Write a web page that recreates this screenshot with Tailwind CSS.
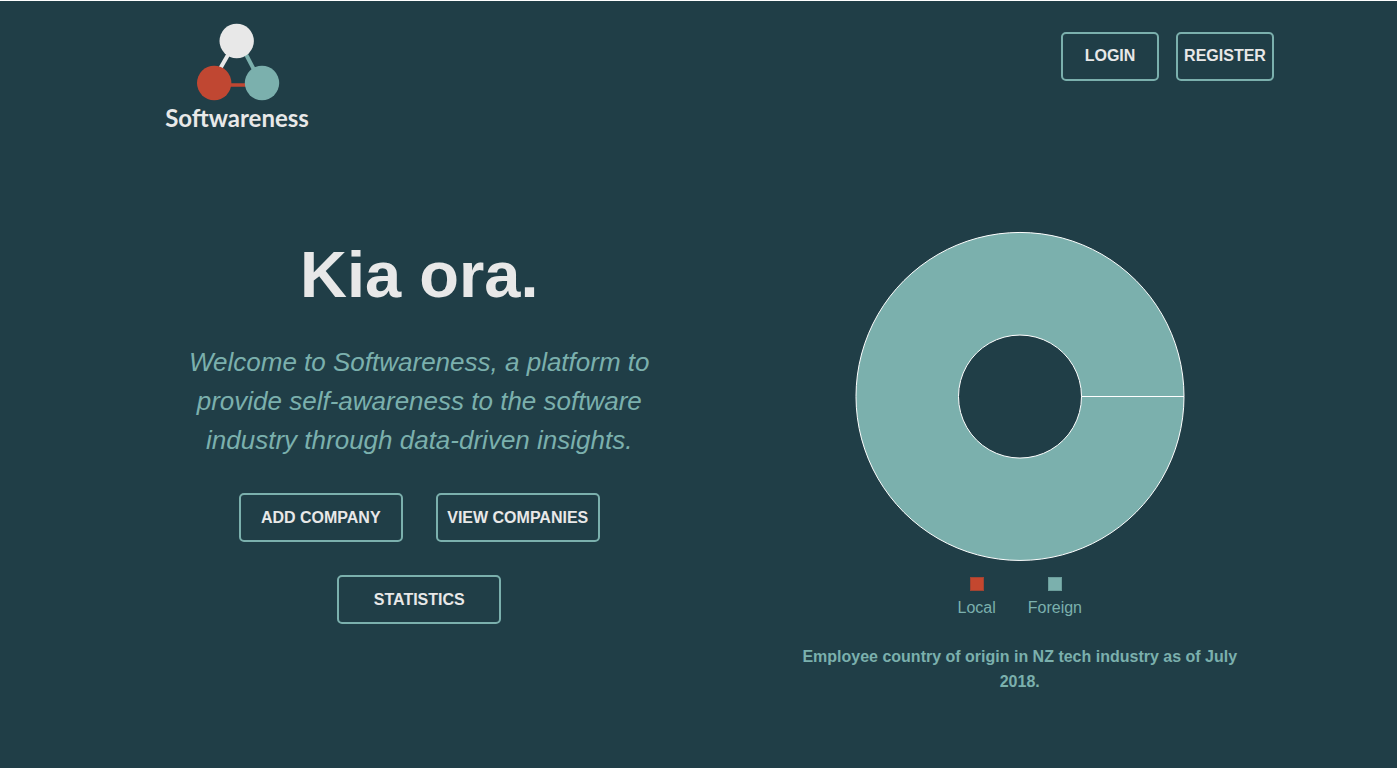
<!DOCTYPE html>
<html lang="en">
<head>
<meta charset="utf-8">
<meta name="viewport" content="width=device-width, initial-scale=1">
<title>Softwareness</title>
<script src="https://cdn.jsdelivr.net/npm/@tailwindcss/browser@4"></script>
</head>
<body class="min-h-screen border-t border-white bg-[#203e47] pl-[42px] font-['Liberation_Sans',Arial,sans-serif] text-base text-[#e8e8e8]">
<div class="mx-auto max-w-[1201px]">
  <header class="flex items-start justify-between pt-[21px] pr-[46px] pl-[44px]">
    <a href="#" class="flex w-[148px] flex-col items-center">
      <svg class="h-[80px] w-[88px]" viewBox="193 22 88 80" aria-hidden="true">
        <path d="M236 41 213 81" stroke="#e8e8e8" stroke-width="4"/>
        <path d="M239 41 261 83" stroke="#7bb0ad" stroke-width="4"/>
        <path d="M214 85H262" stroke="#c04732" stroke-width="3.6"/>
        <circle cx="236.7" cy="41" r="17.2" fill="#e8e8e8"/>
        <circle cx="214.2" cy="83" r="17.2" fill="#c04732"/>
        <circle cx="262" cy="83" r="17.2" fill="#7bb0ad"/>
      </svg>
      <span class="font-['Lato','Liberation_Sans',sans-serif] text-[24px] leading-[32px] font-bold">Softwareness</span>
    </a>
    <nav class="flex gap-[17px] pt-[10px]">
      <button type="button" class="h-[49px] w-[98px] rounded-[5px] border-2 border-[#7bb0ad] pb-0.5 font-bold">LOGIN</button>
      <button type="button" class="h-[49px] w-[98px] rounded-[5px] border-2 border-[#7bb0ad] pb-0.5 font-bold">REGISTER</button>
    </nav>
  </header>
  <main class="grid grid-cols-2 pt-[97px] pb-12 text-center">
    <section class="flex flex-col items-center pt-1">
      <h1 class="text-[65px] leading-[80px] font-bold">Kia ora.</h1>
      <p class="mt-7 max-w-[490px] text-[26px] leading-[39px] text-[#7bb0ad] italic">Welcome to Softwareness, a platform to provide self-awareness to the software industry through data-driven insights.</p>
      <div class="mt-[33px] flex max-w-[490px] flex-wrap justify-center gap-[33px]">
        <button type="button" class="h-[49px] w-[164px] rounded-[5px] border-2 border-[#7bb0ad] font-bold">ADD COMPANY</button>
        <button type="button" class="h-[49px] w-[164px] rounded-[5px] border-2 border-[#7bb0ad] font-bold">VIEW COMPANIES</button>
        <button type="button" class="h-[49px] w-[164px] rounded-[5px] border-2 border-[#7bb0ad] font-bold">STATISTICS</button>
      </div>
    </section>
    <section class="flex flex-col items-center text-[#7bb0ad]">
      <svg class="size-[330px]" viewBox="0 0 330 330" role="img" aria-label="Employee country of origin">
        <path d="M329 165.500A164 164 0 1 1 329 165.400ZM226.500 165.500A61.500 61.500 0 1 0 226.500 165.600Z" fill="#7bb0ad" fill-rule="evenodd" stroke="#fff" stroke-width="1"/>
        <path d="M226.500 165.500H329" stroke="#fff" stroke-width="1"/>
      </svg>
      <ul class="mt-4 flex gap-8 leading-6">
        <li class="flex flex-col items-center gap-[5px]"><span class="size-[14px] border border-[#a04433] bg-[#c4472f]"></span>Local</li>
        <li class="flex flex-col items-center gap-[5px]"><span class="size-[14px] border border-[#6b9d9b] bg-[#7bb0ad]"></span>Foreign</li>
      </ul>
      <p class="mt-6 max-w-[460px] leading-[25px] font-bold">Employee country of origin in NZ tech industry as of July 2018.</p>
    </section>
  </main>
</div>
</body>
</html>
